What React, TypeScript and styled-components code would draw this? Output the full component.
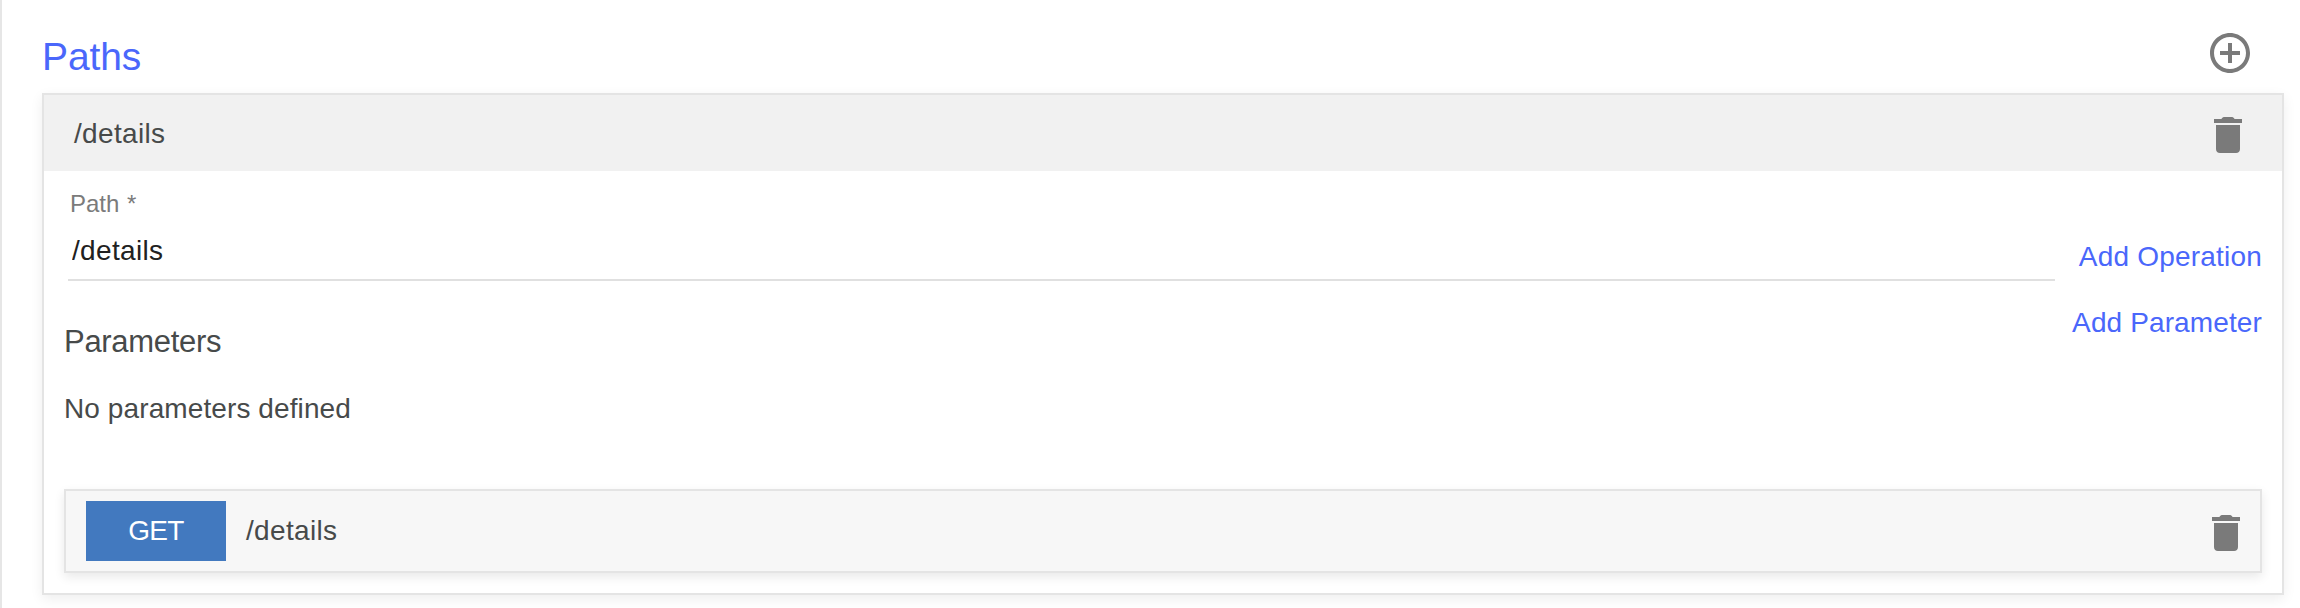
import React from 'react';
import styled, { createGlobalStyle } from 'styled-components';

const GlobalStyle = createGlobalStyle`
  * { box-sizing: border-box; }
  body {
    margin: 0;
    background: #fff;
    color: #474a4a;
    font: 28px/32px "Liberation Sans", Arial, sans-serif;
  }
  h2, h3, p { margin: 0; font-weight: 400; }
`;

const Page = styled.main`
  height: 608px;
  border-left: 2px solid #e6e6e6;
  padding: 29px 16px 0 40px;
`;

const PageHeader = styled.header`
  display: flex;
  justify-content: space-between;
  height: 64px;
  padding-right: 30px;
`;

const PageTitle = styled.h2`
  height: 56px;
  font-size: 39px;
  line-height: 56px;
  letter-spacing: -0.1px;
  color: #4a67fb;
`;

const Panel = styled.section`
  height: 502px;
  border: 2px solid #e4e4e4;
  box-shadow: 0 4px 12px rgba(0, 0, 0, 0.07);
`;

const PanelHeader = styled.div`
  display: flex;
  align-items: center;
  justify-content: space-between;
  height: 76px;
  padding: 4px 30px 0 30px;
  background: #f1f1f1;
`;

const PathLabel = styled.span<{ $raised?: boolean }>`
  letter-spacing: 0.32px;
  margin-top: ${(p) => (p.$raised ? '-2px' : '0')};
`;

const PanelBody = styled.div`
  padding: 21px 20px 0;
`;

const FieldRow = styled.div`
  display: flex;
  justify-content: space-between;
  height: 89px;
`;

const Field = styled.label`
  display: flex;
  flex-direction: column;
  width: 1987px;
  height: 89px;
  margin-left: 4px;
  border-bottom: 2px solid #e0e0e0;
`;

const FieldLabel = styled.span`
  padding-left: 2px;
  font-size: 24px;
  line-height: 24px;
  word-spacing: 1px;
  color: #7b7b7b;
`;

const FieldInput = styled.input`
  height: 32px;
  margin-top: 19px;
  padding: 0 0 0 4px;
  border: 0;
  outline: 0;
  background: transparent;
  font: inherit;
  letter-spacing: 0.32px;
  color: #212121;
`;

const TextButton = styled.button<{ $top: number; $tracking: number }>`
  height: 32px;
  margin-top: ${(p) => p.$top}px;
  padding: 0;
  border: 0;
  background: none;
  font: inherit;
  letter-spacing: ${(p) => p.$tracking}px;
  color: #4a67fb;
`;

const ParametersRow = styled.div`
  display: flex;
  justify-content: space-between;
  height: 112px;
`;

const ParametersTitle = styled.h3`
  margin-top: 45px;
  font-size: 31px;
  line-height: 32px;
  letter-spacing: -0.3px;
`;

const EmptyMessage = styled.p`
  height: 96px;
  letter-spacing: 0.1px;
`;

const Operation = styled.div`
  display: flex;
  align-items: center;
  height: 84px;
  padding: 0 10px 0 20px;
  border: 2px solid #e4e4e4;
  background: #f7f7f7;
  box-shadow: 0 4px 10px rgba(0, 0, 0, 0.09);
`;

const Method = styled.span`
  width: 140px;
  height: 60px;
  margin-right: 20px;
  line-height: 60px;
  text-align: center;
  letter-spacing: -0.7px;
  color: #fff;
  background: #4279bf;
`;

const IconButton = styled.button<{ $lowered?: boolean }>`
  display: flex;
  height: 48px;
  margin: ${(p) => (p.$lowered ? '4px' : '0')} 0 0 auto;
  padding: 0;
  border: 0;
  background: none;
  color: #7a7a7a;
`;

const Icon = ({ d }: { d: string }) => (
  <svg width="48" height="48" viewBox="0 0 24 24" fill="currentColor" aria-hidden="true">
    <path d={d} />
  </svg>
);

const ADD =
  'M13 7h-2v4H7v2h4v4h2v-4h4v-2h-4V7zm-1-5C6.48 2 2 6.48 2 12s4.48 10 10 10 10-4.48 10-10S17.52 2 12 2zm0 18c-4.41 0-8-3.59-8-8s3.59-8 8-8 8 3.59 8 8-3.59 8-8 8z';
const TRASH =
  'M6 7h12v12c0 1.2-.8 2-2 2H8c-1.2 0-2-.8-2-2zM5 4h3.7c.4-.7.9-1 1.7-1h3.2c.8 0 1.3.3 1.7 1H19v2H5z';

export default function App() {
  return (
    <>
      <GlobalStyle />
      <Page>
        <PageHeader>
          <PageTitle>Paths</PageTitle>
          <IconButton aria-label="Add path">
            <Icon d={ADD} />
          </IconButton>
        </PageHeader>
        <Panel>
          <PanelHeader>
            <PathLabel $raised>/details</PathLabel>
            <IconButton aria-label="Delete path">
              <Icon d={TRASH} />
            </IconButton>
          </PanelHeader>
          <PanelBody>
            <FieldRow>
              <Field>
                <FieldLabel>Path *</FieldLabel>
                <FieldInput defaultValue="/details" />
              </Field>
              <TextButton $top={49} $tracking={0.2}>Add Operation</TextButton>
            </FieldRow>
            <ParametersRow>
              <ParametersTitle>Parameters</ParametersTitle>
              <TextButton $top={26} $tracking={0.12}>Add Parameter</TextButton>
            </ParametersRow>
            <EmptyMessage>No parameters defined</EmptyMessage>
            <Operation>
              <Method>GET</Method>
              <PathLabel>/details</PathLabel>
              <IconButton $lowered aria-label="Delete operation">
                <Icon d={TRASH} />
              </IconButton>
            </Operation>
          </PanelBody>
        </Panel>
      </Page>
    </>
  );
}
